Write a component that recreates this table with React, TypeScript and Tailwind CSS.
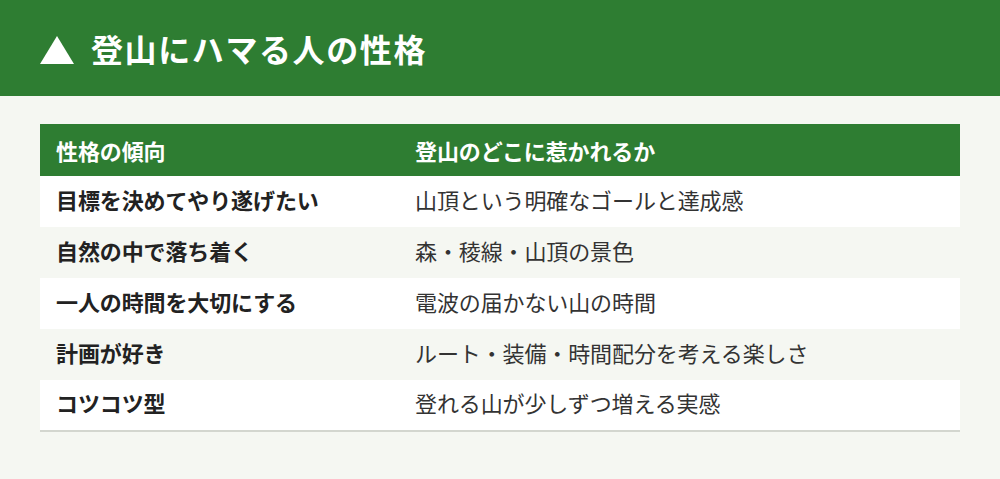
import React from "react";

const rows = [
  { trait: "目標を決めてやり遂げたい", appeal: "山頂という明確なゴールと達成感" },
  { trait: "自然の中で落ち着く", appeal: "森・稜線・山頂の景色" },
  { trait: "一人の時間を大切にする", appeal: "電波の届かない山の時間" },
  { trait: "計画が好き", appeal: "ルート・装備・時間配分を考える楽しさ" },
  { trait: "コツコツ型", appeal: "登れる山が少しずつ増える実感" },
];

export default function App() {
  return (
    <div
      className="w-[1000px] h-[479px] bg-[#f5f7f2] overflow-hidden"
      style={{ fontFamily: '"Noto Sans CJK JP", "Noto Sans", sans-serif' }}
    >
      <div className="h-[96px] bg-[#2e7d32] flex items-center pl-[40px] gap-[17px]">
        <svg width="34" height="28" viewBox="0 0 34 28" className="mt-[3px]">
          <polygon points="17,0 34,28 0,28" fill="#ffffff" />
        </svg>
        <h1 className="text-white text-[32px] font-bold tracking-[0.05em]">登山にハマる人の性格</h1>
      </div>

      <div className="px-[40px] pt-[28px]">
        <table className="w-full border-collapse text-[22px] tracking-[-0.005em]">
          <thead>
            <tr className="bg-[#2e7d32] text-white h-[52px]">
              <th className="text-left font-bold pl-[16px] w-[375px]">性格の傾向</th>
              <th className="text-left font-bold pl-0">登山のどこに惹かれるか</th>
            </tr>
          </thead>
          <tbody>
            {rows.map((r, i) => (
              <tr
                key={r.trait}
                className={`h-[51px] ${i % 2 === 0 ? "bg-white" : "bg-[#f5f7f2]"} ${i === rows.length - 1 ? "border-b-2 border-[#d3d6cf]" : ""}`}
              >
                <td className="pl-[16px] pb-[5px] font-bold text-[#222222]">{r.trait}</td>
                <td className="pb-[5px] text-[#333333]">{r.appeal}</td>
              </tr>
            ))}
          </tbody>
        </table>
      </div>
    </div>
  );
}
